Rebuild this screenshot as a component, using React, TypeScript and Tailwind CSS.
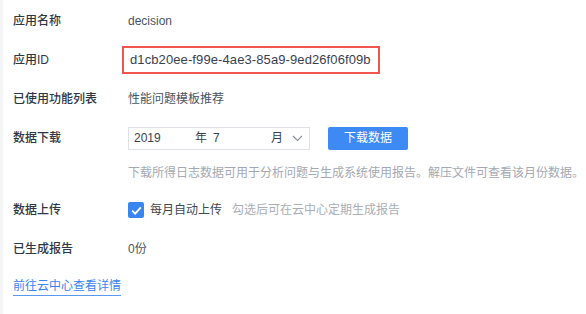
import React from 'react';

const font = { fontFamily: '"Liberation Sans", "Noto Sans CJK SC", sans-serif' };

function Row({ label, className, children }: { label?: string; className: string; children?: React.ReactNode }) {
	return (
		<div className={`flex items-center ${className}`}>
			<div className="w-[115px] shrink-0 text-[12px] font-medium text-[#2f3744]">{label}</div>
			<div className="flex items-center">{children}</div>
		</div>
	);
}

export default function App() {
	return (
		<div className="w-[586px] h-[314px] bg-white flex" style={font}>
			{/* faint left rail */}
			<div className="w-[3px] bg-[#f4f5f7]" />
			<div className="flex flex-col pl-[10px] pt-[2px] flex-1">
				<Row label="应用名称" className="h-[38px]">
					<span className="text-[12px] text-[#4b5361]">decision</span>
				</Row>
				<div className="flex items-center h-[40px]">
					<div className="w-[109px] shrink-0 text-[12px] font-medium text-[#2f3744]">应用ID</div>
					<div className="h-[28px] w-[258px] border-2 border-[#f0564c] flex items-center pl-[6px] text-[13px] text-[#3a4250] tracking-[0.1px]">
						d1cb20ee-f99e-4ae3-85a9-9ed26f06f09b
					</div>
				</div>
				<Row label="已使用功能列表" className="h-[38px]">
					<span className="text-[12px] text-[#4b5361]">性能问题模板推荐</span>
				</Row>
				<Row label="数据下载" className="h-[40px]">
					<div className="w-[182px] h-[23px] border border-[#dfe2e7] flex items-center text-[12px] text-[#3a4250]">
						<span className="pl-[5px] w-[66px]">2019</span>
						<span>年</span>
						<span className="ml-[6px] w-[58px]">7</span>
						<span>月</span>
						<svg className="ml-[9px]" width="11" height="7" viewBox="0 0 11 7" fill="none">
							<path d="M1 1l4.5 4.5L10 1" stroke="#8a909a" strokeWidth="1.1" />
						</svg>
					</div>
					<button className="ml-[18px] w-[80px] h-[23px] rounded-[2px] bg-[#3d8af5] text-white text-[12px]">下载数据</button>
				</Row>
				<Row className="h-[30px]">
					<span className="text-[12px] text-[#a3a9b3] whitespace-nowrap">
						下载所得日志数据可用于分析问题与生成系统使用报告。解压文件可查看该月份数据。
					</span>
				</Row>
				<Row label="数据上传" className="h-[40px] mt-[2px]">
					<span className="w-[16px] h-[16px] rounded-[2px] bg-[#3a86f0] flex items-center justify-center">
						<svg width="11" height="9" viewBox="0 0 11 9" fill="none">
							<path d="M1.2 4.6l3 3L9.8 1.4" stroke="white" strokeWidth="1.8" />
						</svg>
					</span>
					<span className="ml-[6px] text-[12px] text-[#3f4754]">每月自动上传</span>
					<span className="ml-[10px] text-[12px] text-[#a9aeb7]">勾选后可在云中心定期生成报告</span>
				</Row>
				<Row label="已生成报告" className="h-[38px]">
					<span className="text-[12px] text-[#4b5361]">0份</span>
				</Row>
				<div className="h-[38px] flex items-center">
					<span className="text-[12px] text-[#3b84ee] border-b border-[#5b98f0] leading-[17px]">前往云中心查看详情</span>
				</div>
			</div>
		</div>
	);
}
